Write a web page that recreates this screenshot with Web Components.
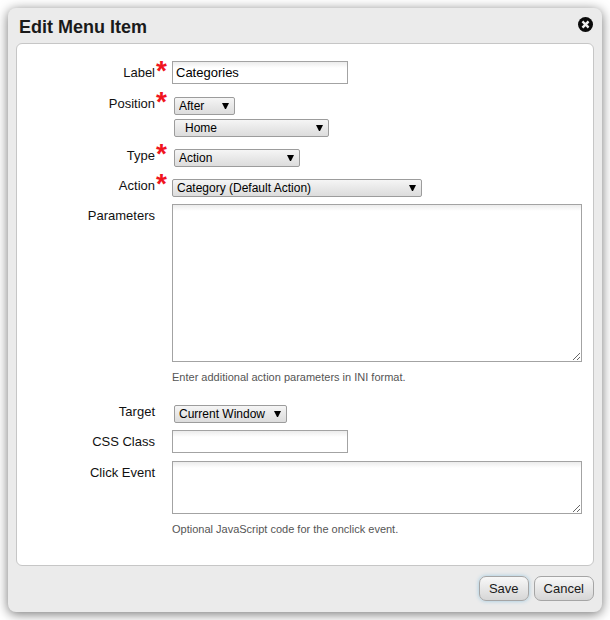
<!DOCTYPE html>
<html lang="en">
<head>
<meta charset="utf-8">
<title>Edit Menu Item</title>
<style>
body { margin: 0; padding: 8px; background: #fff; color: #111; font: 13px/23px "Liberation Sans", Arial, sans-serif; }
</style>
</head>
<body>
<modal-dialog heading="Edit Menu Item">
  <form-field label="Label" required><text-template value="Categories"></text-template></form-field>
  <form-field label="Position" required>
    <select-template width="61" options="After|Before|Under"></select-template>
    <select-template width="155" indent name="Reference item" options="Home"></select-template>
  </form-field>
  <form-field label="Type" required><select-template width="126" options="Action|URL"></select-template></form-field>
  <form-field label="Action" required><select-template width="250" flush options="Category (Default Action)"></select-template></form-field>
  <form-field label="Parameters" hint="Enter additional action parameters in INI format."><area-template height="158"></area-template></form-field>
  <form-field label="Target"><select-template width="113" options="Current Window|New Window"></select-template></form-field>
  <form-field label="CSS Class"><text-template value=""></text-template></form-field>
  <form-field label="Click Event" hint="Optional JavaScript code for the onclick event."><area-template height="53"></area-template></form-field>
  <push-button slot="actions" primary>Save</push-button>
  <push-button slot="actions">Cancel</push-button>
</modal-dialog>

<template id="dialog-markup">
<style>
:host { display: block; background: #ebebeb; border-radius: 8px; box-shadow: 0 2px 12px rgba(0,0,0,.55); padding: 0 8px 11px; }
header { display: flex; justify-content: space-between; align-items: flex-start; height: 35px; padding: 0 1px 0 3px; }
h1 { margin: 0; padding-top: 7px; font-size: 18px; line-height: 25px; color: #1a1a1a; }
.close { display: block; margin: 9px 0 0; padding: 0; border: 0; background: none; line-height: 0; cursor: pointer; }
main { display: grid; gap: 7px; background: #fff; border: 1px solid #c6c6c6; border-radius: 6px; padding: 17px 11px 20px 0; }
footer { display: flex; justify-content: flex-end; gap: 5px; padding-top: 10px; }
</style>
<header>
  <h1></h1>
  <button class="close" type="button" aria-label="Close">
    <svg width="15" height="15" viewBox="0 0 15 15"><circle cx="7.5" cy="7.5" r="7.5" fill="#0b0b0b"/><path d="M5.3 5.3l4.4 4.4M9.7 5.3l-4.4 4.4" stroke="#f1f1f1" stroke-width="2.4" stroke-linecap="square"/></svg>
  </button>
</header>
<main><slot></slot></main>
<footer><slot name="actions"></slot></footer>
</template>

<template id="field-markup">
<style>
:host { display: grid; grid-template-columns: 138px 17px minmax(0, 1fr); align-items: start; }
.label { text-align: right; }
.star { color: #f0141e; font-size: 28px; font-weight: bold; line-height: 19px; height: 23px; padding-left: 1px; }
.controls { display: flex; flex-direction: column; align-items: flex-start; gap: 4px; min-height: 23px; }
.controls.text { min-height: 24px; }
.controls.select { padding: 5px 0 0 2px; min-height: 18px; }
.controls.flush { padding-left: 0; }
input, textarea, select { box-sizing: border-box; margin: 0; color: #000; border: 1px solid #a3a3a3; font: 13px/17px "Liberation Sans", Arial, sans-serif; max-width: 100%; }
input, textarea { background: #fff linear-gradient(#ececec, #fff 6px) no-repeat; border-radius: 0; padding: 2px 3px; }
input { width: 176px; height: 23px; }
textarea { width: 100%; resize: both; display: block; }
select { appearance: none; height: 18px; padding: 0 16px 0 4px; font-size: 12px; line-height: 16px; border-radius: 2px; border-color: #9c9c9c;
  background: url("data:image/svg+xml,%3Csvg xmlns='http://www.w3.org/2000/svg' width='7' height='6'%3E%3Cpath d='M0 0H7L4 6H3Z'/%3E%3C/svg%3E") right 5px center no-repeat, linear-gradient(#f5f5f5, #dcdcdc); }
select.indent { padding-left: 10px; }
.hint { grid-column: 3; font-size: 11px; line-height: 31px; color: #555; }
</style>
<label class="label" for="control"></label>
<span class="star" aria-hidden="true"></span>
<div class="controls"></div>
</template>

<template id="button-markup">
<style>
:host { display: block; }
button { display: block; box-sizing: border-box; height: 25px; margin: 0; padding: 0 9px; border: 1px solid #a5a5a5; border-radius: 7px; background: linear-gradient(#f8f8f8, #d6d6d6); color: #1a1a1a; font: 13px/23px "Liberation Sans", Arial, sans-serif; cursor: pointer; }
:host([primary]) button { box-shadow: 0 0 4px #9cc8e0; }
</style>
<button type="button"><slot></slot></button>
</template>

<script>
function stamp(host, id) {
  const root = host.attachShadow({ mode: "open" });
  root.append(document.getElementById(id).content.cloneNode(true));
  return root;
}

class ModalDialog extends HTMLElement {
  connectedCallback() {
    if (this.shadowRoot) return;
    const root = stamp(this, "dialog-markup");
    this.setAttribute("role", "dialog");
    this.setAttribute("aria-label", this.getAttribute("heading"));
    root.querySelector("h1").textContent = this.getAttribute("heading");
    root.querySelector(".close").addEventListener("click", () => { this.style.display = "none"; });
  }
}

// Builds the label and its controls in one shadow root, so that the label's "for" reaches the control.
class FormField extends HTMLElement {
  connectedCallback() {
    if (this.shadowRoot) return;
    const root = stamp(this, "field-markup");
    root.querySelector("label").textContent = this.getAttribute("label");
    if (this.hasAttribute("required")) root.querySelector(".star").textContent = "*";
    const box = root.querySelector(".controls");
    [...this.children].forEach((spec, index) => {
      const kind = spec.localName.split("-")[0];
      const control = document.createElement({ text: "input", area: "textarea", select: "select" }[kind]);
      box.classList.add(kind);
      if (index === 0) control.id = "control";
      else control.setAttribute("aria-label", spec.getAttribute("name"));
      control.required = this.hasAttribute("required");
      if (kind === "text") {
        control.type = "text";
        control.value = spec.getAttribute("value");
      } else if (kind === "area") {
        control.style.height = spec.getAttribute("height") + "px";
      } else {
        control.style.width = spec.getAttribute("width") + "px";
        control.classList.toggle("indent", spec.hasAttribute("indent"));
        box.classList.toggle("flush", spec.hasAttribute("flush"));
        spec.getAttribute("options").split("|").forEach(text => control.add(new Option(text)));
      }
      box.append(control);
    });
    if (this.hasAttribute("hint")) {
      const hint = document.createElement("div");
      hint.className = "hint";
      hint.id = "hint";
      hint.textContent = this.getAttribute("hint");
      root.append(hint);
      root.getElementById("control").setAttribute("aria-describedby", "hint");
    }
  }
}

class PushButton extends HTMLElement {
  connectedCallback() {
    if (!this.shadowRoot) stamp(this, "button-markup");
  }
}

customElements.define("modal-dialog", ModalDialog);
customElements.define("form-field", FormField);
customElements.define("push-button", PushButton);
</script>
</body>
</html>
